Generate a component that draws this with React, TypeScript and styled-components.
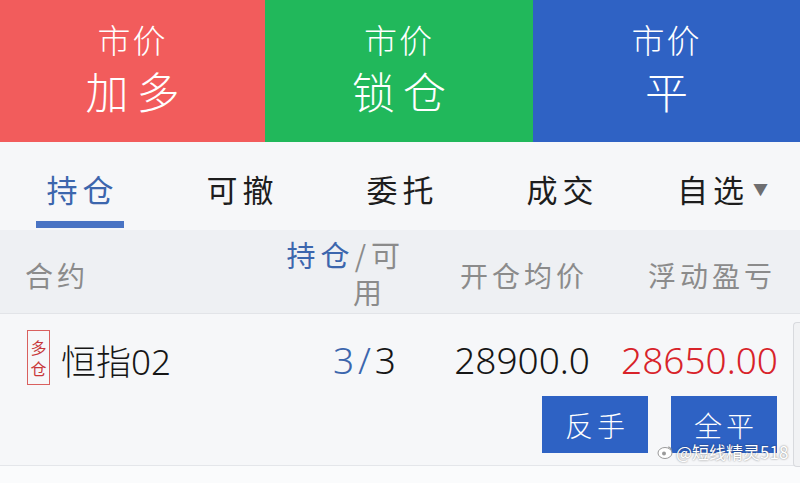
import styled, { createGlobalStyle } from "styled-components";

const GlobalStyle = createGlobalStyle`
  html, body {
    margin: 0;
    padding: 0;
    background: #f6f7f9;
  }
  body {
    font-family: "Noto Sans", "Noto Sans CJK SC", sans-serif;
    overflow: hidden;
  }
`;

const Page = styled.div`
  position: relative;
  width: 800px;
  height: 483px;
  overflow: hidden;
  background: #f6f7f9;
`;

const ActionBar = styled.div`
  display: grid;
  grid-template-columns: 265px 268px 267px;
  height: 142px;
`;

const ActionButton = styled.div<{ $bg: string }>`
  display: flex;
  flex-direction: column;
  align-items: center;
  justify-content: center;
  background: ${(p) => p.$bg};
  color: #fff;
  padding-bottom: 4px;
`;

const ActionSmall = styled.span`
  font-size: 33px;
  line-height: 42px;
  letter-spacing: 2px;
  font-family: "Noto Sans CJK SC", sans-serif;
  font-weight: 300;
`;

const ActionBig = styled.span`
  font-size: 43px;
  line-height: 60px;
  letter-spacing: 8px;
  margin-right: -8px;
  font-family: "Noto Sans CJK SC", sans-serif;
  font-weight: 300;
`;

const TabBar = styled.div`
  display: grid;
  grid-template-columns: repeat(5, 160px);
  height: 88px;
  background: #f6f7f9;
`;

const Tab = styled.div<{ $active?: boolean }>`
  display: flex;
  flex-direction: column;
  align-items: center;
  padding-top: 27px;
  color: ${(p) => (p.$active ? "#3c66ad" : "#1d1d1d")};
`;

const TabLabel = styled.span`
  display: flex;
  align-items: center;
  font-family: "Noto Sans CJK SC", sans-serif;
  font-size: 31px;
  line-height: 40px;
  letter-spacing: 5px;
  margin-right: -5px;
`;

const Caret = styled.span`
  font-size: 15px;
  color: #6e6e70;
  margin-left: 4px;
  letter-spacing: 0;
`;

const Underline = styled.div<{ $show?: boolean }>`
  width: 88px;
  height: 7px;
  margin-top: 12px;
  background: ${(p) => (p.$show ? "#4a74c4" : "transparent")};
`;

const Header = styled.div`
  display: grid;
  grid-template-columns: 215px 160px 188px 188px;
  padding: 0 24px 0 25px;
  height: 83px;
  align-items: center;
  background: #eef0f3;
  border-bottom: 1px solid #e2e4e8;
  font-family: "Noto Sans CJK SC", sans-serif;
  font-size: 28px;
  color: #8b8b8b;
  letter-spacing: 4px;
`;

const HeadCell = styled.div<{ $right?: boolean }>`
  text-align: ${(p) => (p.$right ? "right" : "left")};
  padding-top: 6px;
  white-space: nowrap;
`;

const StackedHead = styled.div`
  display: flex;
  flex-direction: column;
  align-items: flex-end;
  font-size: 29px;
  line-height: 37px;
  letter-spacing: 5px;
  margin-right: -5px;
  padding-top: 2px;
`;

const Accent = styled.span`
  color: #3c66ad;
`;

const SecondLine = styled.span`
  margin-right: 18px;
`;

const Row = styled.div`
  display: flex;
  flex-direction: column;
  padding: 20px 0 12px;
  background: #f6f7f9;
  border-bottom: 1px solid #e4e6ea;
`;

const DataLine = styled.div`
  display: grid;
  grid-template-columns: 215px 160px 188px 188px;
  padding: 0 23px 0 27px;
  height: 46px;
  align-items: center;
  font-size: 37px;
  color: #161616;
`;

const NameCell = styled.div`
  display: flex;
  align-items: center;
  gap: 11px;
`;

const Badge = styled.div`
  display: flex;
  flex-direction: column;
  align-items: center;
  justify-content: center;
  gap: 2px;
  width: 21px;
  height: 53px;
  border: 1.5px solid #d9605f;
  color: #c8383a;
  font-family: "Noto Sans CJK SC", sans-serif;
  font-size: 16px;
  line-height: 19px;
  margin-top: -4px;
`;

const Name = styled.span`
  font-size: 35px;
  font-weight: 300;
  font-family: "Noto Sans", "Noto Sans CJK SC", sans-serif;
`;

const NumCell = styled.div<{ $color?: string; $spaced?: boolean }>`
  text-align: right;
  color: ${(p) => p.$color ?? "#161616"};
  white-space: nowrap;
  font-weight: 300;
  letter-spacing: ${(p) => (p.$spaced ? "4px" : "0")};
  padding-right: ${(p) => (p.$spaced ? "2px" : "0")};
`;

const Blue = styled.span`
  color: #3c66ad;
`;

const ButtonLine = styled.div`
  display: flex;
  justify-content: flex-end;
  gap: 23px;
  padding-right: 23px;
  margin-top: 16px;
`;

const RowButton = styled.button`
  width: 106px;
  height: 57px;
  border: none;
  background: #2e62c4;
  color: #fff;
  font-family: "Noto Sans CJK SC", sans-serif;
  font-size: 28px;
  font-weight: 300;
  letter-spacing: 4px;
  padding: 0 0 0 4px;
`;

const Footer = styled.div`
  height: 18px;
  background: #fafbfc;
`;

const ScrollThumb = styled.div`
  position: absolute;
  right: 0;
  top: 322px;
  width: 6px;
  height: 143px;
  border: 1px solid #d8dade;
  border-right: none;
  border-radius: 4px 0 0 4px;
  background: #f1f2f4;
`;

const Watermark = styled.div`
  position: absolute;
  left: 657px;
  top: 439px;
  display: flex;
  align-items: center;
  gap: 3px;
  color: #fff;
  font-family: "Noto Sans CJK SC", sans-serif;
  font-size: 17px;
  text-shadow: 0 0 2px rgba(0, 0, 0, 0.55);
`;

export default function App() {
  return (
    <Page>
      <GlobalStyle />
      <ActionBar>
        <ActionButton $bg="#f25c5c">
          <ActionSmall>市价</ActionSmall>
          <ActionBig>加多</ActionBig>
        </ActionButton>
        <ActionButton $bg="#21b85b">
          <ActionSmall>市价</ActionSmall>
          <ActionBig>锁仓</ActionBig>
        </ActionButton>
        <ActionButton $bg="#2f62c4">
          <ActionSmall>市价</ActionSmall>
          <ActionBig>平</ActionBig>
        </ActionButton>
      </ActionBar>

      <TabBar>
        {["持仓", "可撤", "委托", "成交"].map((t, i) => (
          <Tab key={t} $active={i === 0}>
            <TabLabel>{t}</TabLabel>
            <Underline $show={i === 0} />
          </Tab>
        ))}
        <Tab>
          <TabLabel>
            自选<Caret>▼</Caret>
          </TabLabel>
          <Underline />
        </Tab>
      </TabBar>

      <Header>
        <HeadCell>合约</HeadCell>
        <StackedHead>
          <span>
            <Accent>持仓</Accent>/可
          </span>
          <SecondLine>用</SecondLine>
        </StackedHead>
        <HeadCell $right>开仓均价</HeadCell>
        <HeadCell $right>浮动盈亏</HeadCell>
      </Header>

      <Row>
        <DataLine>
          <NameCell>
            <Badge>
              <span>多</span>
              <span>仓</span>
            </Badge>
            <Name>恒指02</Name>
          </NameCell>
          <NumCell $spaced>
            <Blue>3/</Blue>3
          </NumCell>
          <NumCell>28900.0</NumCell>
          <NumCell $color="#d8232a">28650.00</NumCell>
        </DataLine>
        <ButtonLine>
          <RowButton>反手</RowButton>
          <RowButton>全平</RowButton>
        </ButtonLine>
      </Row>
      <Footer />

      <ScrollThumb />
      <Watermark>
        <svg width="16" height="14" viewBox="0 0 16 14">
          <ellipse cx="8" cy="8" rx="7" ry="5.5" fill="#fff" stroke="#9a9a9a" strokeWidth="1" />
          <circle cx="7" cy="8.5" r="2" fill="#9a9a9a" />
          <path d="M11 2 Q14 2 14 5" stroke="#9a9a9a" fill="none" strokeWidth="1.2" />
        </svg>
        <span>@短线精灵518</span>
      </Watermark>
    </Page>
  );
}
